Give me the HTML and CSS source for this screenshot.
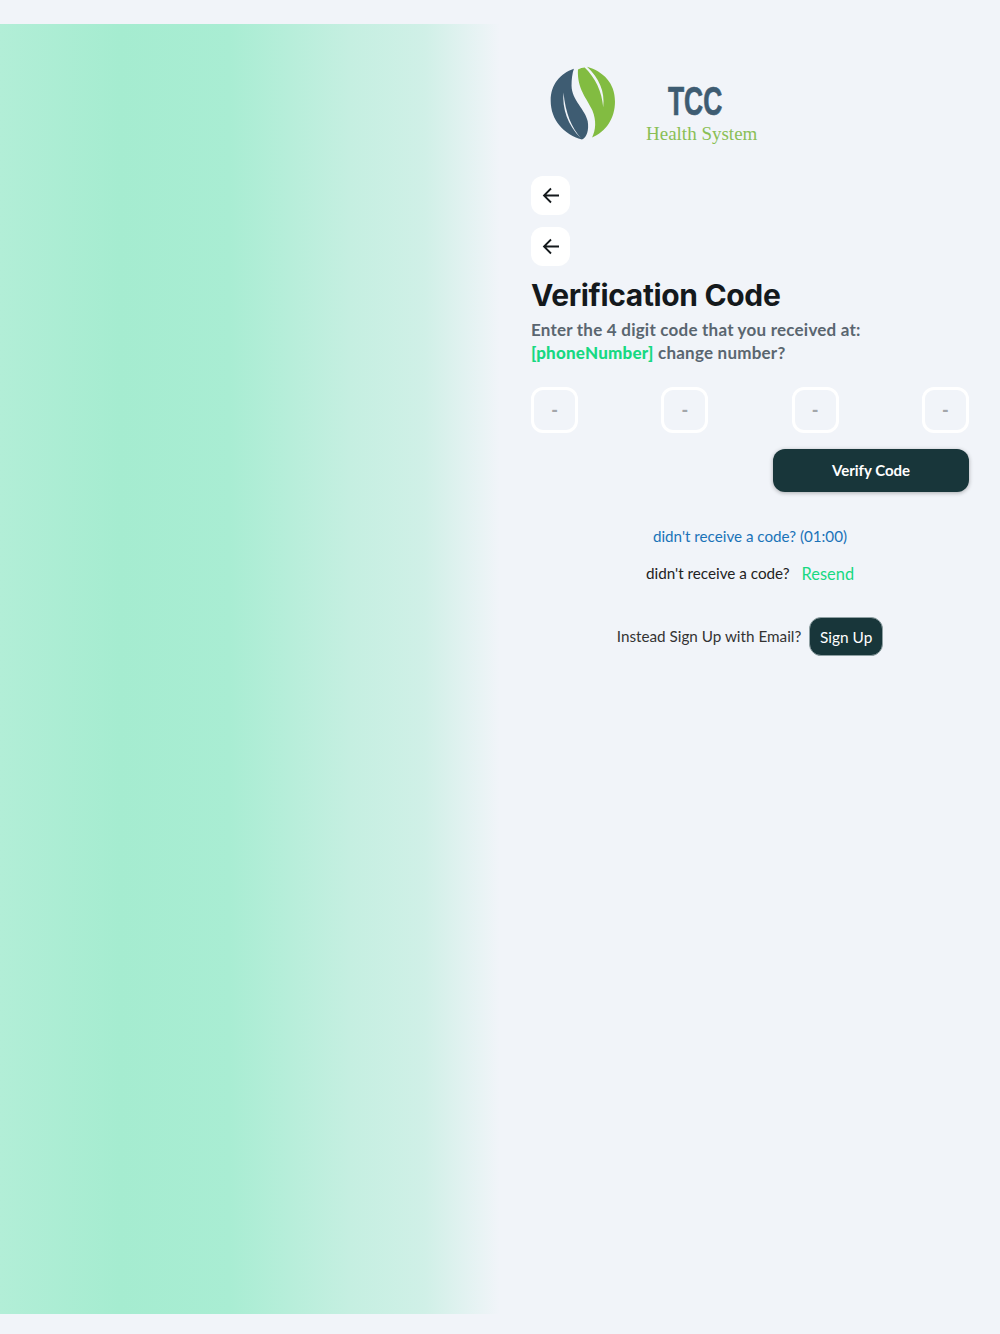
FILE: index.html

```html
<!DOCTYPE html>
<html lang="en">
<head>
  <meta charset="UTF-8" />
  <meta name="viewport" content="width=device-width, initial-scale=1.0"/>
  <title>Verification Code - TCC Health System</title>
  <link rel="stylesheet" href="styles.css">
</head>
<body>

  <div class="page">
    <div class="side-panel"></div>

    <div class="content">
      <div class="logo">
        <svg class="logo-mark" viewBox="60 50 196 222" aria-hidden="true">
          <path fill="#3e5c72" d="M131 58C90 72 62 105 62 152C62 210 100 252 155 268C170 262 176 240 172 214C166 180 124 150 124 108C124 90 126 72 131 58Z"/>
          <path fill="#f1f4f9" d="M100 128C96 175 112 225 152 264C124 232 106 190 100 128Z"/>
          <path fill="#82bc41" d="M143 60C150 56 157 54 163 54C195 85 214 125 218 172C224 125 205 85 170 52C218 66 253 100 253 155C253 205 226 245 185 262C196 240 198 212 186 182C170 146 140 118 143 60Z"/>
        </svg>
        <div class="logo-text">
          <span class="logo-tcc">TCC</span>
          <span class="logo-sub">Health System</span>
        </div>
      </div>

      <button class="back-btn" aria-label="Back">
        <svg viewBox="0 0 24 24" width="24" height="24"><path d="M20 11.5H5M12 4.5l-7 7 7 7" fill="none" stroke="#14191c" stroke-width="1.8"/></svg>
      </button>
      <button class="back-btn" aria-label="Back">
        <svg viewBox="0 0 24 24" width="24" height="24"><path d="M20 11.5H5M12 4.5l-7 7 7 7" fill="none" stroke="#14191c" stroke-width="1.8"/></svg>
      </button>

      <h1>Verification Code</h1>
      <p class="intro">
        Enter the 4 digit code that you received at:<br>
        <span class="phone">[phoneNumber]</span> change number?
      </p>

      <div class="code-row">
        <div class="code-box">-</div>
        <div class="code-box">-</div>
        <div class="code-box">-</div>
        <div class="code-box">-</div>
      </div>

      <div class="verify-row">
        <button class="verify-btn">Verify Code</button>
      </div>

      <p class="timer">didn't receive a code? (01:00)</p>

      <div class="resend-row">
        <span>didn't receive a code?</span>
        <a class="resend" href="#">Resend</a>
      </div>

      <div class="signup-row">
        <span class="signup-label">Instead Sign Up with Email?</span>
        <button class="signup-btn">Sign Up</button>
      </div>
    </div>
  </div>

</body>
</html>
```

FILE: styles.css

```css
body {
  font-family: 'Lato', 'Noto Sans', sans-serif;
  background-color: #f1f4f9;
  margin: 0;
  padding: 0;
}

.page {
  display: flex;
  height: 1334px;
}

.side-panel {
  width: 500px;
  margin: 24px 0 20px;
  background: linear-gradient(90deg, #b2eed7 0%, #a5ecd0 24%, #a9edd3 46%, #c5efe1 70%, #d0f0e7 85%, #f1f4f9 100%);
}

.content {
  width: 438px;
  padding: 60px 31px 0;
  display: flex;
  flex-direction: column;
  align-items: flex-start;
}

.logo {
  display: flex;
  height: 104px;
  margin-bottom: 12px;
  padding: 6px 0 0 19px;
  box-sizing: border-box;
}

.logo-mark {
  width: 66px;
  height: 75px;
}

.logo-text {
  display: flex;
  flex-direction: column;
  align-items: center;
  margin-left: 30px;
  padding-top: 13px;
}

.logo-tcc {
  font-family: 'Liberation Sans', sans-serif;
  font-size: 40px;
  line-height: 44px;
  font-weight: bold;
  color: #3e5c72;
  -webkit-text-stroke: 0.7px #3e5c72;
  transform: scaleX(0.66);
  margin-right: 14px;
}

.logo-sub {
  font-family: 'Liberation Serif', serif;
  font-size: 19px;
  line-height: 22px;
  color: #8abf55;
}

.back-btn {
  width: 39px;
  height: 39px;
  margin-bottom: 12px;
  padding: 0;
  border: none;
  border-radius: 12px;
  background-color: white;
  display: flex;
  align-items: center;
  justify-content: center;
}

h1 {
  font-family: 'Inter', sans-serif;
  font-size: 30px;
  letter-spacing: -0.35px;
  line-height: 34px;
  font-weight: 700;
  color: #14191c;
  margin: 0 0 6px;
}

.intro {
  font-size: 17px;
  letter-spacing: 0.22px;
  line-height: 23px;
  font-weight: 700;
  color: #5a6670;
  margin: 0 0 23px;
}

.phone {
  color: #17d982;
  font-weight: 900;
}

.code-row {
  display: flex;
  justify-content: space-between;
  width: 100%;
  margin-bottom: 16px;
}

.code-box {
  width: 47px;
  height: 46px;
  box-sizing: border-box;
  border: 3px solid white;
  border-radius: 12px;
  display: flex;
  align-items: center;
  justify-content: center;
  font-size: 18px;
  font-weight: 900;
  color: #a3a6aa;
}

.verify-row {
  display: flex;
  justify-content: flex-end;
  width: 100%;
  margin-bottom: 33px;
}

.verify-btn {
  width: 196px;
  height: 43px;
  padding: 0 0 2px;
  border: none;
  border-radius: 12px;
  background-color: #18363a;
  color: white;
  font-family: inherit;
  font-size: 15px;
  font-weight: 700;
  box-shadow: 0 1px 4px rgba(0,0,0,0.3);
}

.timer {
  width: 100%;
  text-align: center;
  font-size: 15.2px;
  line-height: 22px;
  color: #1a73b8;
  margin: 0 0 15px;
}

.resend-row {
  width: 100%;
  display: flex;
  justify-content: center;
  align-items: center;
  gap: 12px;
  height: 22px;
  font-size: 15.25px;
  color: #222;
  margin-bottom: 33px;
}

.resend {
  color: #17d982;
  font-size: 16.4px;
  text-decoration: none;
}

.signup-row {
  width: 100%;
  display: flex;
  justify-content: center;
  align-items: center;
  gap: 8px;
  font-size: 15.25px;
  color: #333;
}

.signup-label {
  padding-bottom: 2px;
}

.signup-btn {
  width: 74px;
  height: 39px;
  padding: 0;
  border: 1px solid #8fa0a3;
  border-radius: 12px;
  background-color: #18363a;
  color: white;
  font-family: inherit;
  font-size: 15.4px;
}
```
